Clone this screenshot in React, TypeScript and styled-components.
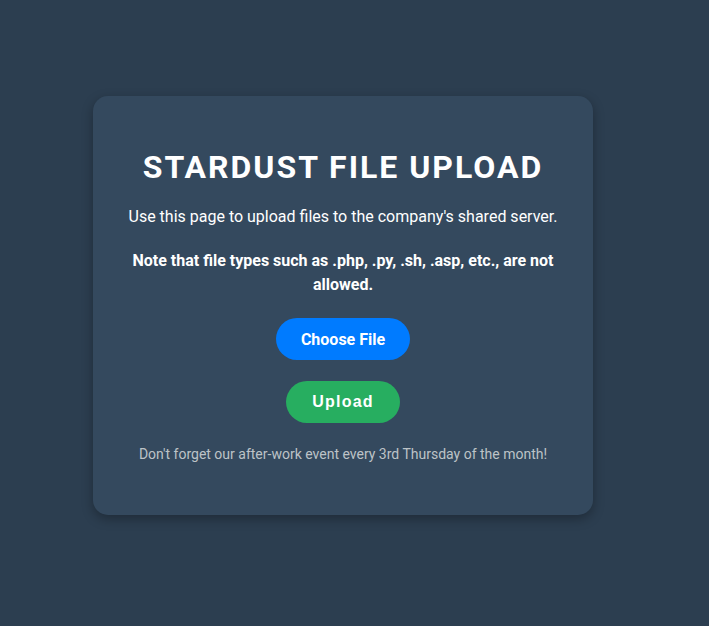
import React from "react";
import styled, { createGlobalStyle } from "styled-components";

const GlobalStyle = createGlobalStyle`
  html, body {
    margin: 0;
    padding: 0;
    background: #2c3e50;
    font-family: Roboto, "Liberation Sans", Arial, sans-serif;
    color: #ffffff;
  }
`;

const Page = styled.div`
  min-height: 626px;
  box-sizing: border-box;
  padding: 96px 0 0 93px;
`;

const Card = styled.div`
  width: 500px;
  box-sizing: border-box;
  padding: 53px 30px 50px;
  background: #34495e;
  border-radius: 15px;
  box-shadow: 0 4px 12px rgba(0, 0, 0, 0.3);
  display: flex;
  flex-direction: column;
  align-items: center;
  text-align: center;
`;

const Title = styled.h1`
  margin: 0;
  font-size: 32px;
  line-height: 36px;
  font-weight: 700;
  letter-spacing: 2px;
  text-transform: uppercase;
  color: #ffffff;
`;

const Text = styled.p<{ $bold?: boolean; $top: number }>`
  margin: ${(p) => p.$top}px 0 0;
  font-size: 16px;
  line-height: 24px;
  font-weight: ${(p) => (p.$bold ? 700 : 400)};
  color: #ffffff;
`;

const FileInput = styled.input`
  display: none;
`;

const ChooseLabel = styled.label`
  margin-top: 21px;
  height: 42px;
  box-sizing: border-box;
  padding: 0 25px;
  display: inline-flex;
  align-items: center;
  justify-content: center;
  background: #007bff;
  color: #ffffff;
  border-radius: 21px;
  font-family: Roboto, "Liberation Sans", sans-serif;
  font-size: 16px;
  font-weight: 700;
  cursor: pointer;
`;

const UploadButton = styled.button`
  margin-top: 21px;
  height: 42px;
  box-sizing: border-box;
  padding: 0 26px;
  border: none;
  background: #27ae60;
  color: #ffffff;
  border-radius: 21px;
  font-family: "Liberation Sans", Arial, sans-serif;
  font-size: 16px;
  font-weight: 700;
  letter-spacing: 1.2px;
  cursor: pointer;
`;

const Footer = styled.p`
  margin: 21px 0 0;
  font-size: 14px;
  line-height: 21px;
  color: #bdc3c7;
`;

export default function App() {
  return (
    <>
      <GlobalStyle />
      <Page>
        <Card>
          <Title>Stardust File Upload</Title>
          <Text $top={20}>Use this page to upload files to the company's shared server.</Text>
          <Text $top={20} $bold>
            Note that file types such as .php, .py, .sh, .asp, etc., are not allowed.
          </Text>
          <ChooseLabel>
            Choose File
            <FileInput type="file" />
          </ChooseLabel>
          <UploadButton type="button">Upload</UploadButton>
          <Footer>Don't forget our after-work event every 3rd Thursday of the month!</Footer>
        </Card>
      </Page>
    </>
  );
}
